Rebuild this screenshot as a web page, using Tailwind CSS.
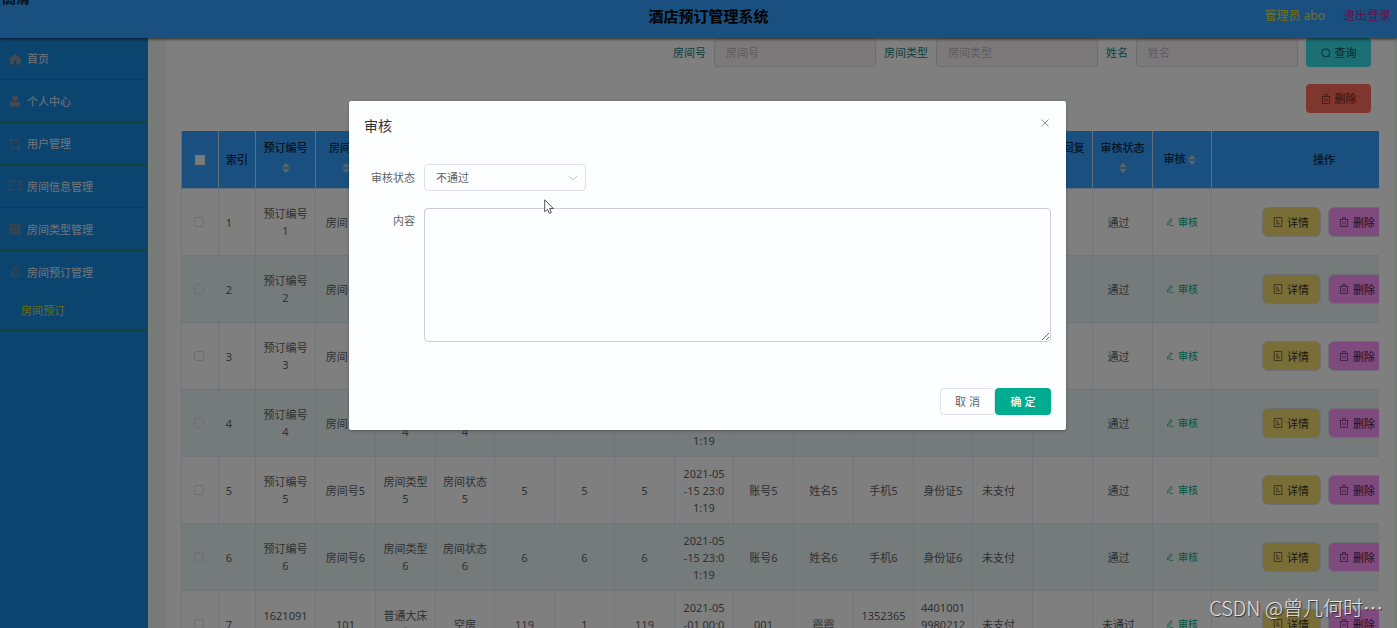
<!DOCTYPE html>
<html lang="zh-CN">
<head>
<meta charset="utf-8">
<title>酒店预订管理系统</title>
<script src="https://cdn.jsdelivr.net/npm/@tailwindcss/browser@4"></script>
</head>
<body class="relative h-screen overflow-hidden bg-white font-['Noto_Sans','Noto_Sans_CJK_SC',sans-serif] text-[11px] leading-[17px] text-[#606266]">
<svg class="hidden">
  <symbol id="down" viewBox="0 0 10 10"><path d="M1 3l4 4 4-4" fill="none" stroke="currentColor"/></symbol>
  <symbol id="up" viewBox="0 0 10 10"><path d="M1 7l4-4 4 4" fill="none" stroke="currentColor"/></symbol>
  <symbol id="sort" viewBox="0 0 8 10"><path d="M4 0l4 4.200H0zM4 10L0 5.800h8z" fill="currentColor"/></symbol>
  <symbol id="trash" viewBox="0 0 10 10"><path d="M.5 2.500h9M3.500 2.500v-2h3v2M1.500 2.500v7h7v-7M4 4.500v3M6 4.500v3" fill="none" stroke="currentColor" stroke-width=".8"/></symbol>
  <symbol id="doc" viewBox="0 0 10 10"><path d="M1.200.5h7.600v9H1.200zM3 3.200h2M3 5h3M3 6.800h4" fill="none" stroke="currentColor" stroke-width=".8"/></symbol>
  <symbol id="edit" viewBox="0 0 10 10"><path d="M5.800.8l1.800 1.200-3.800 5.800-2 1 .2-2.200zM4.500 9.300H9" fill="none" stroke="currentColor" stroke-width=".9"/></symbol>
</svg>

<div class="flex h-full flex-col overflow-hidden">
  <header class="relative z-10 flex h-[38px] shrink-0 items-start justify-center bg-[#33a1ff] shadow-[0_1px_3px_rgba(0,0,0,0.7)]">
    <h1 class="pt-[5px] pl-5 text-[15px] leading-[22px] font-bold text-black">酒店预订管理系统</h1>
    <div class="absolute top-[7px] right-1.5 flex gap-[18px] text-[12px] leading-[18px]">
      <span class="text-[#e0e030]">管理员 abo</span>
      <a href="#" class="text-[#b02c9c]">退出登录</a>
    </div>
  </header>

  <div class="flex min-h-0 flex-1 overflow-hidden">
    <nav class="w-[148px] shrink-0 bg-[#1888e0] text-[#e0e8f0]">
      <a href="#" class="flex h-[42px] items-center gap-[6px] border-b border-[#208060] pl-[9px]"><svg class="h-3 w-3 text-[#909399]" viewBox="0 0 12 12"><path d="M6 .5l5.500 5V11.500H7.500V8a1.500 1.500 0 0 0-3 0v3.500H.8V5.500z" fill="currentColor"/></svg>首页</a>
      <button class="flex h-[43px] w-full items-center gap-[6px] border-b border-[#208060] pr-[15px] pl-[9px]"><svg class="h-3 w-3 text-[#909399]" viewBox="0 0 12 12"><circle cx="6" cy="3.500" r="2.800" fill="currentColor"/><path d="M.5 11.500V9q.2-2 2.200-2h6.600q2 0 2.200 2v2.500z" fill="currentColor"/></svg>个人中心<svg class="ml-auto h-2 w-2 text-[#5090c4]"><use href="#down"/></svg></button>
      <button class="flex h-[42px] w-full items-center gap-[6px] border-b border-[#208060] pr-[15px] pl-[9px]"><svg class="h-3 w-3 text-[#808890]" viewBox="0 0 12 12"><path d="M2 0v10h10M0 2h10v10" fill="none" stroke="currentColor"/></svg>用户管理<svg class="ml-auto h-2 w-2 text-[#5090c4]"><use href="#down"/></svg></button>
      <button class="flex h-[43px] w-full items-center gap-[6px] border-b border-[#208060] pr-[15px] pl-[9px]"><svg class="h-3 w-3 text-[#808890]" viewBox="0 0 12 12"><path d="M.5 1h11V9.500H3L.5 11.500zM3 5.200h1.200M5.400 5.200h1.200M7.800 5.200H9" fill="none" stroke="currentColor"/></svg>房间信息管理<svg class="ml-auto h-2 w-2 text-[#5090c4]"><use href="#down"/></svg></button>
      <button class="flex h-[43px] w-full items-center gap-[6px] border-b border-[#208060] pr-[15px] pl-[9px]"><svg class="h-3 w-3 text-[#808890]" viewBox="0 0 12 12"><path d="M.5.5h3.200v3.200H.5zM4.400.5h3.200v3.200H4.400zM8.300.5h3.200v3.200H8.300zM.5 4.400h3.200v3.200H.5zM4.400 4.400h3.200v3.200H4.400zM8.300 4.400h3.200v3.200H8.300zM.5 8.300h3.200v3.200H.5zM4.400 8.300h3.200v3.200H4.400zM8.300 8.300h3.200v3.200H8.300z" fill="currentColor"/></svg>房间类型管理<svg class="ml-auto h-2 w-2 text-[#5090c4]"><use href="#down"/></svg></button>
      <div class="border-b border-[#208060]">
        <button class="flex h-[42px] w-full items-center gap-[6px] pr-[15px] pl-[9px]"><svg class="h-3 w-3 text-[#808890]" viewBox="0 0 12 12"><path d="M2.500 9V5Q2.700 2 6 2q1.500 0 2.500 1M9.500 5v4.500H4M6 2V.5M5 11.200h2M11 .8L1 11.500M.8 9.500h1.500M9.500 9.500h2" fill="none" stroke="currentColor"/></svg>房间预订管理<svg class="ml-auto h-2 w-2 text-[#5090c4]"><use href="#up"/></svg></button>
        <a href="#" class="flex h-[37px] items-center pb-0.5 pl-[21px] text-[#c8dc30]">房间预订</a>
      </div>
    </nav>

    <main class="min-w-0 flex-1 bg-[#eff7f1] pr-[3px] pl-[18px]">
      <div class="h-full overflow-hidden bg-white px-[15px]">
        <form class="flex items-center justify-end gap-2 pr-2 text-[#188078]">
          <label for="q1">房间号</label>
          <input id="q1" placeholder="房间号" class="h-[29px] w-[162px] rounded-sm border border-[#dcd8e0] bg-[#f8f2f4] px-[11px] placeholder:text-[#b8b8bc]">
          <label for="q2">房间类型</label>
          <input id="q2" placeholder="房间类型" class="h-[29px] w-[162px] rounded-sm border border-[#dcd8e0] bg-[#f8f2f4] px-[11px] placeholder:text-[#b8b8bc]">
          <label for="q3">姓名</label>
          <input id="q3" placeholder="姓名" class="h-[29px] w-[162px] rounded-sm border border-[#dcd8e0] bg-[#f8f2f4] px-[11px] placeholder:text-[#b8b8bc]">
          <button type="button" class="flex h-[29px] w-[65px] items-center justify-center gap-1 rounded-sm bg-[#34dce8] text-[#204850]"><svg class="h-2.5 w-2.5" viewBox="0 0 10 10"><circle cx="4.800" cy="4.800" r="4" fill="none" stroke="currentColor" stroke-width=".9"/><path d="M7.800 7.800l1.500 1.500" stroke="currentColor" stroke-width=".9"/></svg>查询</button>
        </form>
        <div class="flex justify-end pt-[17px] pr-2 pb-[18px]">
          <button class="flex h-[29px] w-[65px] items-center justify-center gap-1 rounded-sm bg-[#ff6c5c] text-[#602820]"><svg class="h-2.5 w-2.5 opacity-80"><use href="#trash"/></svg>删除</button>
        </div>
        <div class="overflow-hidden">
          <table class="w-[1256px] table-fixed border-separate border-spacing-0 text-center">
            <colgroup id="cols"><col class="w-[38px]"><col class="w-[37px]"></colgroup>
            <thead class="bg-[#33a1ff] text-[#082848]"><tr id="head" class="h-[58px]"></tr></thead>
            <tbody id="rows"></tbody>
          </table>
        </div>
      </div>
    </main>
  </div>
</div>

<div class="absolute inset-0 z-20 flex items-start justify-center bg-black/50 pt-[101px] pl-[18px]">
  <section role="dialog" aria-labelledby="dlg" class="w-[717px] rounded-xs bg-[#fdfeff] px-[15px] pb-[15px] shadow-[0_1px_3px_rgba(0,0,0,0.3)]">
    <div class="flex items-start justify-between pt-4">
      <h2 id="dlg" class="text-[14px] leading-[18px] text-[#303133]">审核</h2>
      <button aria-label="关闭" class="pt-[2px] pr-[2px] text-[#909399]"><svg class="h-2 w-2" viewBox="0 0 8 8"><path d="M.5.5l7 7M7.500.5l-7 7" stroke="currentColor"/></svg></button>
    </div>
    <div class="flex items-center gap-[9px] pt-[29px]">
      <label for="state" class="flex w-[51px] justify-end whitespace-nowrap">审核状态</label>
      <div class="relative">
        <select id="state" class="h-[27px] w-[162px] appearance-none rounded-sm border border-[#dcdfee] bg-transparent px-[11px]"><option>不通过</option><option>通过</option></select>
        <svg class="pointer-events-none absolute top-[9px] right-2 h-2.5 w-2.5 text-[#c0c4cc]"><use href="#down"/></svg>
      </div>
    </div>
    <div class="flex items-start gap-[9px] pt-[17px]">
      <label for="content" class="w-[51px] pt-1 text-right">内容</label>
      <textarea id="content" class="block h-[134px] flex-1 resize rounded-sm border border-[#ccccdc]"></textarea>
    </div>
    <div class="flex justify-end pt-[46px]">
      <button class="h-[27px] w-[55px] rounded-sm border border-[#e2e2ee]">取 消</button>
      <button class="h-[27px] w-[56px] rounded-sm bg-[#00ac90] font-medium text-white">确 定</button>
    </div>
  </section>
</div>

<div class="absolute -top-[11px] left-[2px] z-30 text-[14px] leading-[17px] font-bold text-[#081018]">高清</div>
<svg class="absolute top-[199px] left-[544px] z-30 h-4 w-2.5" viewBox="0 0 10 16"><path d="M.7.8v12l2.800-2.500 1.800 4 2-.8-1.700-4H9.300z" fill="#fff" stroke="#404048" stroke-width=".9"/></svg>
<div class="absolute right-3.5 bottom-1.5 z-30 font-['Noto_Sans_CJK_SC',sans-serif] text-[20px] leading-7 font-light text-[#e4e4e4] [text-shadow:1px_1px_1px_#303030]">CSDN @曾几何时…</div>

<script>
  const cols = document.getElementById('cols');
  for (let i = 0; i < 16; i++) {
    const c = document.createElement('col');
    c.className = i % 4 === 3 ? 'w-[59px]' : 'w-[60px]';
    cols.append(c);
  }
  cols.append(document.createElement('col'));

  const sort = '<svg class="inline-block h-2.5 w-2 text-[#c0c4cc]"><use href="#sort"/></svg>';
  const names = ['', '索引', '预订编号', '房间号', '房间类型', '房间状态', '价格', '天数', '总价', '预订时间', '账号', '姓名', '手机', '身份证', '是否支付', '审核回复', '审核状态', '审核', '操作'];
  document.getElementById('head').innerHTML = names.map((n, i) => {
    let body = n;
    if (i === 0) body = '<input type="checkbox" aria-label="全选" class="block mx-auto size-2.5 appearance-none bg-[#f4f4f4]">';
    else if (i === 17) body = `<div class="pr-1 pb-0.5">${n} ${sort}</div>`;
    else if (i > 1 && i < 17) body = `<div>${n}</div><div class="mt-0.5 pb-[5px]">${sort}</div>`;
    return `<th class="border-r border-b border-[#c8dcf0] font-medium ${i === 0 ? 'border-l' : ''}">${body}</th>`;
  }).join('');

  const data = [];
  for (let n = 1; n < 7; n++) data.push([n, '预订编号' + n, '房间号' + n, '房间类型' + n, '房间状态' + n, n, n, n, '2021-05-15 23:01:19', '账号' + n, '姓名' + n, '手机' + n, '身份证' + n, '未支付', '', '通过']);
  data.push([7, '16210916121', '101', '普通大床房', '空房', 119, 1, 119, '2021-05-01 00:00:00', '001', '霞霞', '13523652365', '440100199802120001', '未支付', '', '未通过']);

  // Inner padding by column: index, time and the status columns differ from the rest.
  const pad = { 0: 'pr-4', 8: 'px-2', 13: 'pr-2', 15: 'pr-2' };
  document.getElementById('rows').innerHTML = data.map((r, k) => {
    const td = 'border-r border-b border-[#e4eaee] break-all';
    const cells = r.map((v, i) => `<td class="${td} ${pad[i] || 'px-[6px]'}">${String(v).replace('-05-', '-05<wbr>-')}</td>`).join('');
    return `<tr class="h-[67px] ${k % 2 ? 'bg-[#eaf6f4]' : 'bg-white'}">
      <td class="${td} border-l"><input type="checkbox" aria-label="选择第${k + 1}行" class="ml-[12px] block size-2.5 appearance-none rounded-xs border border-[#dcdfe6]"></td>${cells}
      <td class="${td}"><button class="inline-flex items-center gap-1 text-[10px] text-[#00ac80]"><svg class="h-2 w-2"><use href="#edit"/></svg>审核</button></td>
      <td class="${td}"><div class="flex justify-center gap-[7px]">
        <button class="flex h-[30px] w-[59px] items-center justify-center gap-1 rounded-md border border-[#dcdfe6] bg-[#f4dc70] text-[#383020]"><svg class="h-2.5 w-2.5 opacity-80"><use href="#doc"/></svg>详情</button>
        <button class="flex h-[30px] w-[59px] items-center justify-center gap-1 rounded-md border border-[#dcdfe6] bg-[#ff94fa] text-[#482048]"><svg class="h-2.5 w-2.5 opacity-80"><use href="#trash"/></svg>删除</button>
      </div></td></tr>`;
  }).join('');
</script>
</body>
</html>
